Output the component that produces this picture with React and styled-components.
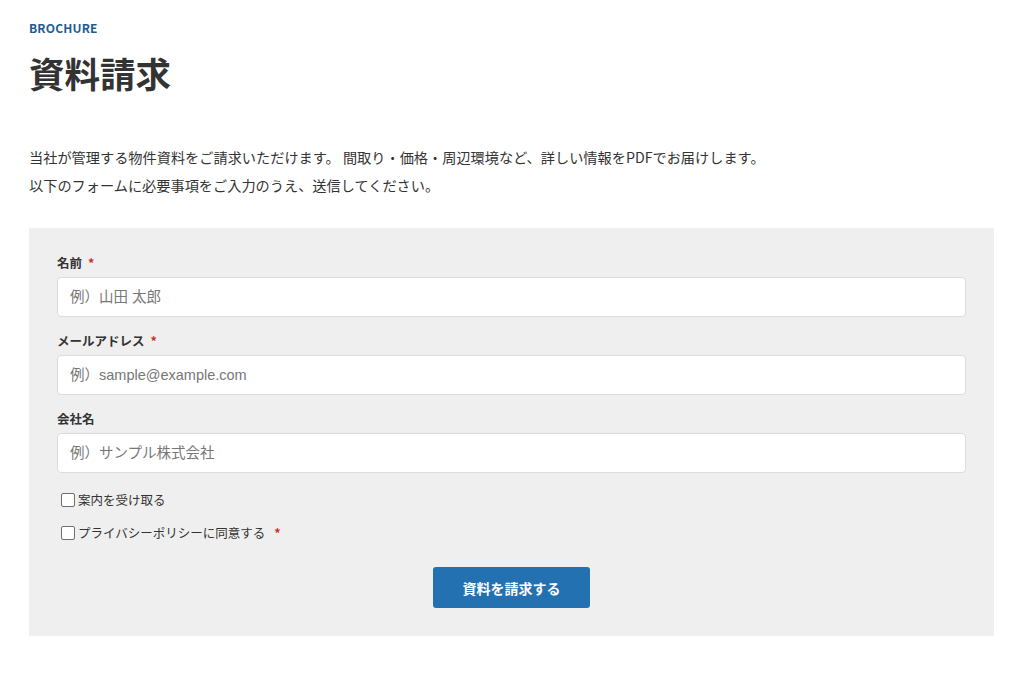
import React from 'react';
import { styled, createGlobalStyle } from 'styled-components';

const GlobalStyle = createGlobalStyle`
  body {
    margin: 0;
    background: #ffffff;
    font-family: "Noto Sans CJK JP", "Noto Sans", sans-serif;
    color: #333333;
  }
`;

const Page = styled.main`
  padding: 18px 30px 40px 29px;
`;

const Eyebrow = styled.p`
  margin: 0;
  font-size: 12px;
  line-height: 20px;
  font-weight: 700;
  letter-spacing: 0.2px;
  color: #1f5b93;
`;

const Title = styled.h1`
  margin: 11px 0 0;
  font-size: 35.5px;
  line-height: 48px;
  font-weight: 700;
  color: #333333;
`;

const Lead = styled.p`
  margin: 46px 0 0;
  font-size: 14.2px;
  line-height: 28px;
  color: #333333;
`;

const FormPanel = styled.form`
  margin-top: 29px;
  background: #efefef;
  padding: 26px 28px 28px;
  display: flex;
  flex-direction: column;
`;

const Field = styled.div`
  display: flex;
  flex-direction: column;
  gap: 5px;
  margin-bottom: 15px;
`;

const Label = styled.label`
  font-size: 12.5px;
  line-height: 18px;
  font-weight: 700;
  color: #333333;
`;

const Required = styled.span`
  color: #d0312d;
  margin-left: 6px;
  font-weight: 700;
`;

const TextInput = styled.input`
  box-sizing: border-box;
  width: 100%;
  height: 40px;
  padding: 0 12px;
  border: 1px solid #dcdcdc;
  border-radius: 4px;
  background: #ffffff;
  font-family: "Liberation Sans", "Noto Sans CJK JP", sans-serif;
  font-size: 14.5px;
  color: #333333;

  &::placeholder {
    color: #777777;
  }
`;

const Checks = styled.div`
  display: flex;
  flex-direction: column;
  gap: 13px;
  margin-top: 2px;
  padding-left: 4px;
`;

const CheckRow = styled.label`
  display: flex;
  align-items: center;
  gap: 3px;
  font-size: 12.5px;
  line-height: 20px;
  color: #333333;
`;

const Box = styled.input`
  box-sizing: border-box;
  appearance: none;
  margin: 0;
  width: 14px;
  height: 14px;
  border: 1px solid #6f6f6f;
  border-radius: 2px;
  background: #ffffff;
`;

const Actions = styled.div`
  display: flex;
  justify-content: center;
  margin-top: 24px;
`;

const SubmitButton = styled.button`
  width: 157px;
  height: 41px;
  border: none;
  border-radius: 3px;
  background: #2371b1;
  color: #ffffff;
  font-family: "Noto Sans CJK JP", sans-serif;
  font-size: 14px;
  font-weight: 700;
  cursor: pointer;
`;

const fields = [
  { id: 'name', label: '名前', required: true, placeholder: '例）山田 太郎' },
  { id: 'email', label: 'メールアドレス', required: true, placeholder: '例）sample@example.com' },
  { id: 'company', label: '会社名', required: false, placeholder: '例）サンプル株式会社' },
];

export default function App() {
  return (
    <>
      <GlobalStyle />
      <Page>
        <Eyebrow>BROCHURE</Eyebrow>
        <Title>資料請求</Title>
        <Lead>
          当社が管理する物件資料をご請求いただけます。 間取り・価格・周辺環境など、詳しい情報をPDFでお届けします。
          <br />
          以下のフォームに必要事項をご入力のうえ、送信してください。
        </Lead>
        <FormPanel onSubmit={(e) => e.preventDefault()}>
          {fields.map((f) => (
            <Field key={f.id}>
              <Label htmlFor={f.id}>
                {f.label}
                {f.required && <Required>*</Required>}
              </Label>
              <TextInput id={f.id} placeholder={f.placeholder} />
            </Field>
          ))}
          <Checks>
            <CheckRow>
              <Box type="checkbox" />
              案内を受け取る
            </CheckRow>
            <CheckRow>
              <Box type="checkbox" />
              プライバシーポリシーに同意する
              <Required>*</Required>
            </CheckRow>
          </Checks>
          <Actions>
            <SubmitButton type="submit">資料を請求する</SubmitButton>
          </Actions>
        </FormPanel>
      </Page>
    </>
  );
}
